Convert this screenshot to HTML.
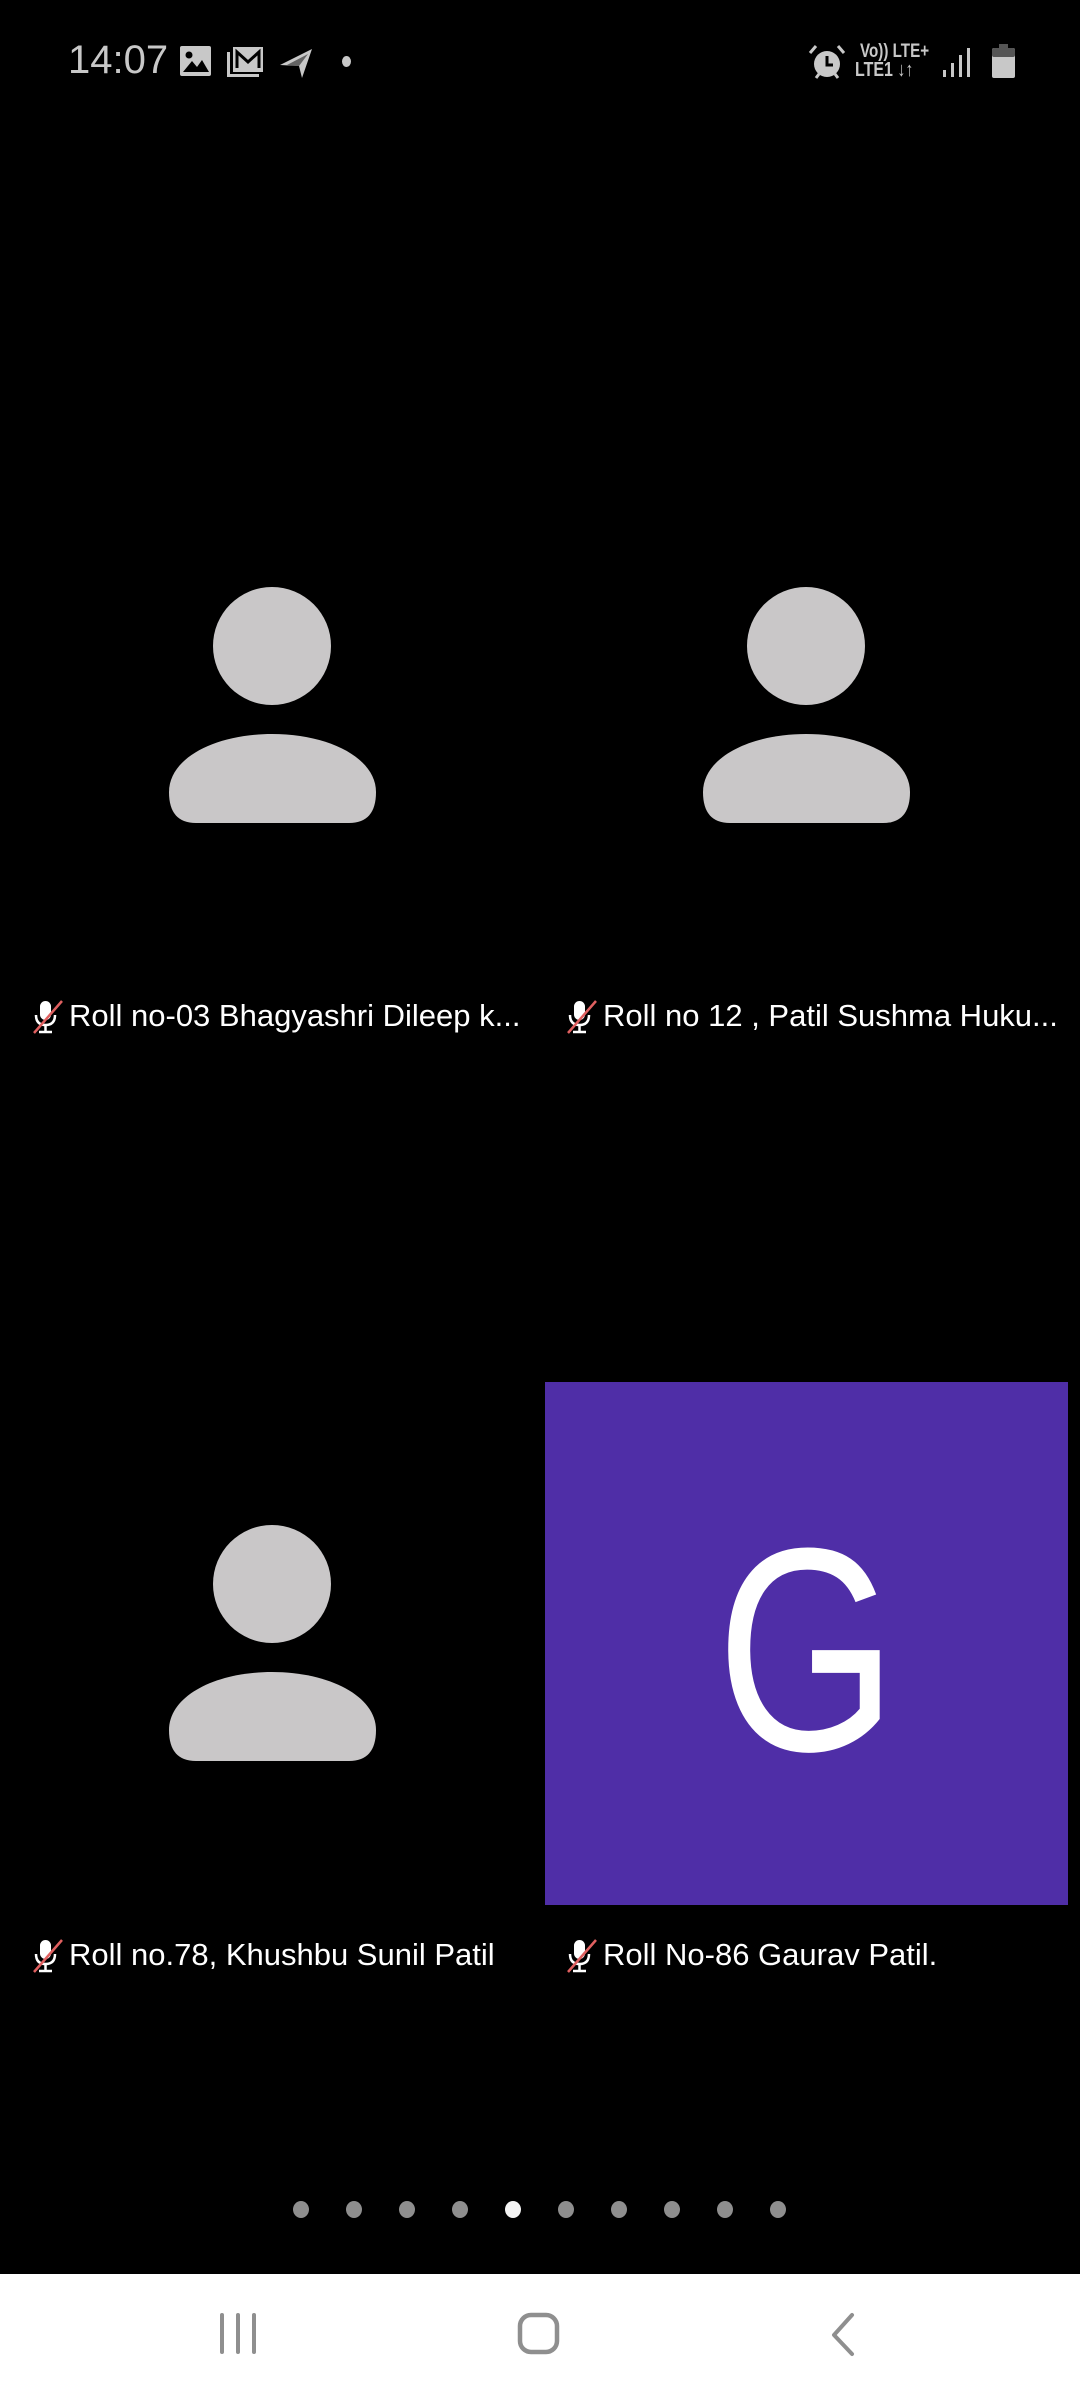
<!DOCTYPE html>
<html><head><meta charset="utf-8"><style>
html,body{margin:0;padding:0;}
body{width:1080px;height:2400px;background:#000;position:relative;overflow:hidden;font-family:"Liberation Sans",sans-serif;}
.abs{position:absolute;}
.lbl{position:absolute;color:#fff;font-size:31px;white-space:nowrap;transform:scaleX(1.0);transform-origin:left top;line-height:31px;}
.dot{position:absolute;width:16px;height:17px;border-radius:50%;background:#8e8e8e;top:2201px;}
</style></head><body>
<!-- status bar -->
<div class="abs" style="left:68px;top:40px;color:#c8c8c8;font-size:40px;line-height:40px;">14:07</div>
<svg class="abs" style="left:180px;top:46px" width="34" height="32" viewBox="0 0 34 32"><rect x="0" y="0" width="31" height="30" rx="2" fill="#c8c8c8"/><circle cx="9" cy="9" r="3.5" fill="#000"/><path d="M3 26 L12 15 L17 21 L22 14 L29 26Z" fill="#000"/></svg>
<svg class="abs" style="left:227px;top:46px" width="38" height="33" viewBox="0 0 38 33"><path d="M0 6 V31 H32 V28 H3 V6Z" fill="#c8c8c8"/><rect x="6" y="1" width="30" height="25" fill="#c8c8c8"/><path d="M10 22 V6 L21 16 L32 6 V22" stroke="#000" stroke-width="3" fill="none"/></svg>
<svg class="abs" style="left:279px;top:48px" width="36" height="32" viewBox="0 0 36 32"><path d="M1 17 L33 1 L23 30 L20 18Z" fill="#c8c8c8"/><path d="M8 17 L20 18 L29 6Z" fill="#000" opacity="0.5"/></svg>
<div class="abs" style="left:342px;top:56px;width:9px;height:11px;border-radius:50%;background:#c8c8c8"></div>
<svg class="abs" style="left:808px;top:44px" width="38" height="36" viewBox="0 0 38 36"><circle cx="19" cy="20" r="13" fill="#c8c8c8"/><path d="M19 12 V21 H25" stroke="#000" stroke-width="3" fill="none"/><path d="M2 9 L8 2 M36 9 L30 2 M8 34 L11 30 M30 34 L27 30" stroke="#c8c8c8" stroke-width="3"/></svg>
<div class="abs" style="left:860px;top:42px;color:#c8c8c8;font-size:19px;line-height:19px;font-weight:bold;transform:scaleX(0.8);transform-origin:left top">Vo)) LTE+</div>
<div class="abs" style="left:855px;top:60px;color:#c8c8c8;font-size:20px;line-height:20px;font-weight:bold;transform:scaleX(0.8);transform-origin:left top">LTE1 ↓↑</div>
<svg class="abs" style="left:942px;top:46px" width="30" height="32" viewBox="0 0 30 32"><rect x="1" y="24" width="3" height="7" fill="#c8c8c8"/><rect x="9" y="17" width="3" height="14" fill="#c8c8c8"/><rect x="17" y="9" width="3" height="22" fill="#c8c8c8"/><rect x="25" y="2" width="3" height="29" fill="#c8c8c8"/></svg>
<svg class="abs" style="left:992px;top:44px" width="23" height="34" viewBox="0 0 23 34"><rect x="7" y="0" width="9" height="5" fill="#555"/><rect x="0" y="4" width="23" height="30" rx="2" fill="#c8c8c8"/><rect x="0" y="4" width="23" height="9" rx="2" fill="#555"/></svg>

<!-- avatars -->
<svg class="abs" style="left:168px;top:586px" width="210" height="238" viewBox="0 0 210 238"><circle cx="104" cy="60" r="59" fill="#c9c7c8"/><path d="M1 206 C1 172 47 148 104 148 C161 148 208 172 208 206 Q208 237 181 237 L28 237 Q1 237 1 206Z" fill="#c9c7c8"/></svg>
<svg class="abs" style="left:702px;top:586px" width="210" height="238" viewBox="0 0 210 238"><circle cx="104" cy="60" r="59" fill="#c9c7c8"/><path d="M1 206 C1 172 47 148 104 148 C161 148 208 172 208 206 Q208 237 181 237 L28 237 Q1 237 1 206Z" fill="#c9c7c8"/></svg>
<svg class="abs" style="left:168px;top:1524px" width="210" height="238" viewBox="0 0 210 238"><circle cx="104" cy="60" r="59" fill="#c9c7c8"/><path d="M1 206 C1 172 47 148 104 148 C161 148 208 172 208 206 Q208 237 181 237 L28 237 Q1 237 1 206Z" fill="#c9c7c8"/></svg>
<div class="abs" style="left:545px;top:1382px;width:523px;height:523px;background:#4f2ea7;"></div>
<div class="abs" style="left:545px;top:1500px;width:523px;text-align:center;color:#fff;font-size:290px;line-height:300px;"><span style="display:inline-block;transform:scaleX(0.8)">G</span></div>

<!-- labels -->
<svg class="abs" style="left:26px;top:998px" width="40" height="40" viewBox="0 0 40 40"><rect x="14" y="3" width="11" height="19" rx="5.5" fill="#fff"/><path d="M10 17 Q10 27 19.5 27 Q29 27 29 17" stroke="#fff" stroke-width="2.5" fill="none"/><path d="M19.5 27 V33 M13 34 H26" stroke="#fff" stroke-width="2.5"/><path d="M8 35 L36 3" stroke="#e06060" stroke-width="2.5"/></svg>
<div class="lbl" style="left:69px;top:1000px">Roll no-03 Bhagyashri Dileep k...</div>
<svg class="abs" style="left:560px;top:998px" width="40" height="40" viewBox="0 0 40 40"><rect x="14" y="3" width="11" height="19" rx="5.5" fill="#fff"/><path d="M10 17 Q10 27 19.5 27 Q29 27 29 17" stroke="#fff" stroke-width="2.5" fill="none"/><path d="M19.5 27 V33 M13 34 H26" stroke="#fff" stroke-width="2.5"/><path d="M8 35 L36 3" stroke="#e06060" stroke-width="2.5"/></svg>
<div class="lbl" style="left:603px;top:1000px">Roll no 12 , Patil Sushma Huku...</div>
<svg class="abs" style="left:26px;top:1937px" width="40" height="40" viewBox="0 0 40 40"><rect x="14" y="3" width="11" height="19" rx="5.5" fill="#fff"/><path d="M10 17 Q10 27 19.5 27 Q29 27 29 17" stroke="#fff" stroke-width="2.5" fill="none"/><path d="M19.5 27 V33 M13 34 H26" stroke="#fff" stroke-width="2.5"/><path d="M8 35 L36 3" stroke="#e06060" stroke-width="2.5"/></svg>
<div class="lbl" style="left:69px;top:1939px">Roll no.78, Khushbu Sunil Patil</div>
<svg class="abs" style="left:560px;top:1937px" width="40" height="40" viewBox="0 0 40 40"><rect x="14" y="3" width="11" height="19" rx="5.5" fill="#fff"/><path d="M10 17 Q10 27 19.5 27 Q29 27 29 17" stroke="#fff" stroke-width="2.5" fill="none"/><path d="M19.5 27 V33 M13 34 H26" stroke="#fff" stroke-width="2.5"/><path d="M8 35 L36 3" stroke="#e06060" stroke-width="2.5"/></svg>
<div class="lbl" style="left:603px;top:1939px">Roll No-86 Gaurav Patil.</div>

<!-- dots -->
<div class="dot" style="left:293px"></div>
<div class="dot" style="left:346px"></div>
<div class="dot" style="left:399px"></div>
<div class="dot" style="left:452px"></div>
<div class="dot" style="left:505px;background:#f4f4f4"></div>
<div class="dot" style="left:558px"></div>
<div class="dot" style="left:611px"></div>
<div class="dot" style="left:664px"></div>
<div class="dot" style="left:717px"></div>
<div class="dot" style="left:770px"></div>

<!-- nav bar -->
<div class="abs" style="left:0;top:2274px;width:1080px;height:126px;background:#fff"></div>
<svg class="abs" style="left:214px;top:2310px" width="50" height="50" viewBox="0 0 50 50"><path d="M8 5 V42 M24 5 V42 M40 5 V42" stroke="#8f8f8f" stroke-width="4" stroke-linecap="round"/></svg>
<svg class="abs" style="left:514px;top:2310px" width="50" height="50" viewBox="0 0 50 50"><rect x="6" y="5" width="37" height="37" rx="11" stroke="#8f8f8f" stroke-width="4.5" fill="none"/></svg>
<svg class="abs" style="left:822px;top:2310px" width="40" height="50" viewBox="0 0 40 50"><path d="M30 5 L12 25 L30 44" stroke="#8f8f8f" stroke-width="4" fill="none" stroke-linecap="round" stroke-linejoin="round"/></svg>
</body></html>
